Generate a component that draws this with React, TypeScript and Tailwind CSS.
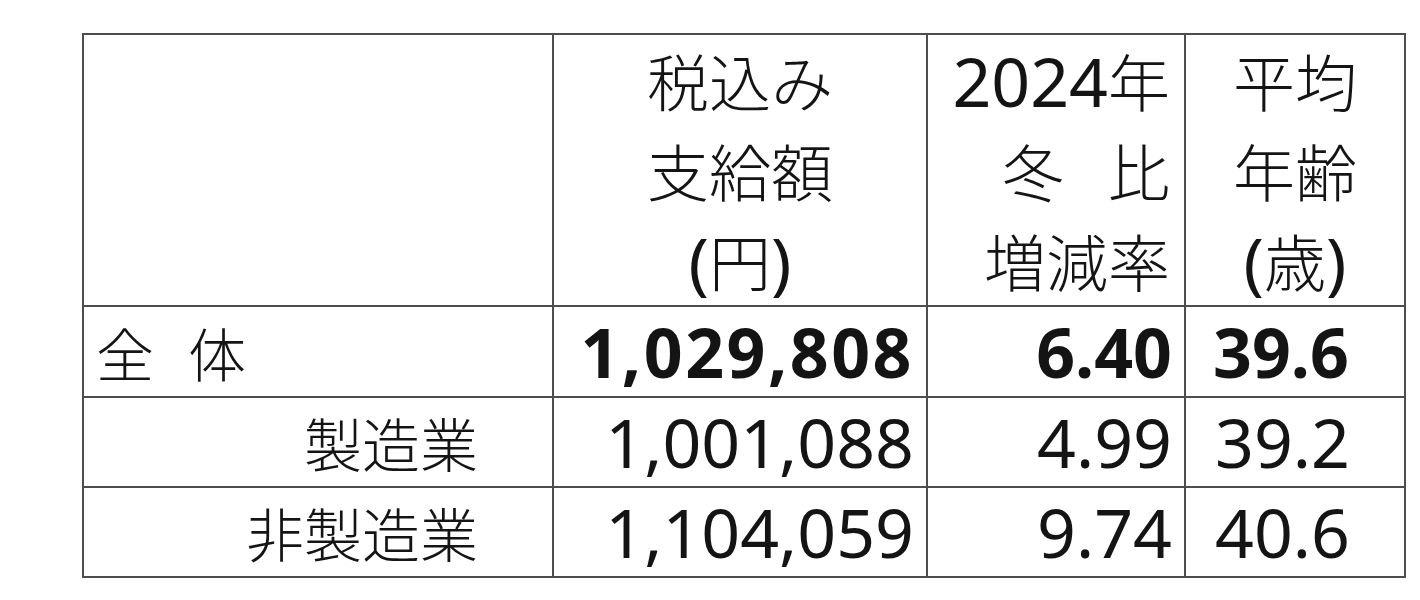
const rows = [
    { label: '製造業', pay: '1,001,088', rate: '4.99', age: '39.2' },
    { label: '非製造業', pay: '1,104,059', rate: '9.74', age: '40.6' },
];

const cell = 'border-2 border-[#4d4d4d] p-0 leading-[80px]';

function Line({ children, align }: { children: React.ReactNode; align: string }) {
    return <div className={`h-[90px] leading-[90px] whitespace-nowrap ${align}`}>{children}</div>;
}

export default function App() {
    return (
        <div className="min-h-[600px] w-[1420px] bg-white pt-[33px] pl-[82px] font-['Noto_Sans','Noto_Sans_CJK_JP',sans-serif] text-[#141414]">
            <table className="table-fixed border-collapse w-[1322px]">
                <colgroup>
                    <col className="w-[470px]" />
                    <col className="w-[374px]" />
                    <col className="w-[258px]" />
                    <col className="w-[220px]" />
                </colgroup>
                <tbody>
                    <tr className="h-[272px]">
                        <td className={cell} />
                        <td className={`${cell} align-top`}>
                            <div className="text-[62px] font-light font-['Noto_Sans_CJK_JP',sans-serif]">
                                <Line align="text-center">税込み</Line>
                                <Line align="text-center">支給額</Line>
                            </div>
                            <Line align="text-center text-[68px]">
                                (<span className="text-[62px] font-light font-['Noto_Sans_CJK_JP',sans-serif]">円</span>)
                            </Line>
                        </td>
                        <td className={`${cell} align-top pr-[14px]`}>
                            <Line align="text-right text-[68px]">
                                2024<span className="text-[62px] font-light font-['Noto_Sans_CJK_JP',sans-serif]">年</span>
                            </Line>
                            <div className="text-[62px] font-light font-['Noto_Sans_CJK_JP',sans-serif]">
                                <Line align="text-right">
                                    冬<span className="ml-[44px]">比</span>
                                </Line>
                                <Line align="text-right">増減率</Line>
                            </div>
                        </td>
                        <td className={`${cell} align-top`}>
                            <div className="text-[62px] font-light font-['Noto_Sans_CJK_JP',sans-serif]">
                                <Line align="text-center">平均</Line>
                                <Line align="text-center">年齢</Line>
                            </div>
                            <Line align="text-center text-[68px]">
                                (<span className="text-[62px] font-light font-['Noto_Sans_CJK_JP',sans-serif]">歳</span>)
                            </Line>
                        </td>
                    </tr>
                    <tr className="h-[91px]">
                        <td className={`${cell} pl-[12px] text-[58px] font-light font-['Noto_Sans_CJK_JP',sans-serif]`}>
                            全<span className="ml-[34px]">体</span>
                        </td>
                        <td className={`${cell} pr-[12px] text-right text-[68px] font-bold tracking-[2.5px]`}>1,029,808</td>
                        <td className={`${cell} pr-[12px] text-right text-[68px] font-bold`}>6.40</td>
                        <td className={`${cell} pl-[27px] text-left text-[68px] font-bold`}>39.6</td>
                    </tr>
                    {rows.map((r) => (
                        <tr key={r.label} className="h-[90px]">
                            <td className={`${cell} pr-[74px] text-right text-[58px] font-light font-['Noto_Sans_CJK_JP',sans-serif]`}>
                                {r.label}
                            </td>
                            <td className={`${cell} pr-[12px] text-right text-[68px]`}>{r.pay}</td>
                            <td className={`${cell} pr-[12px] text-right text-[68px]`}>{r.rate}</td>
                            <td className={`${cell} pl-[29px] text-left text-[68px]`}>{r.age}</td>
                        </tr>
                    ))}
                </tbody>
            </table>
        </div>
    );
}
